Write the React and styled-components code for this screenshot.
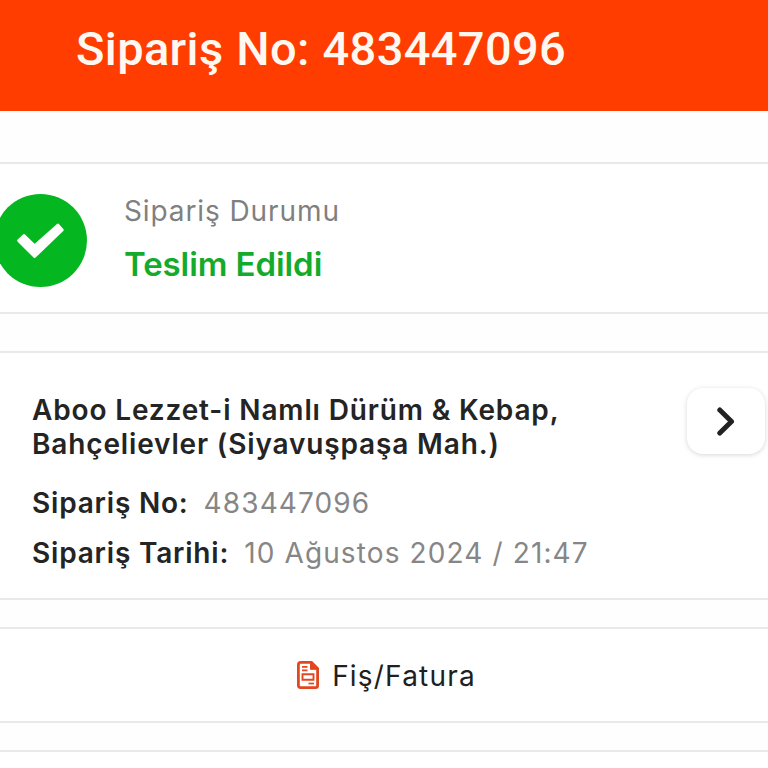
import React from "react";
import styled, { createGlobalStyle } from "styled-components";

const App = () => {
    return (
        <>
            <GlobalStyle />
            <Page>
                <Header>
                    <Title>Sipariş No: 483447096</Title>
                </Header>

                <StatusCard>
                    <StatusCircle>
                        <svg width="48" height="36" viewBox="0 0 48 36">
                            <path d="M2.7 17.6L8 12.6L18.6 22.8L42 2.2L46.2 7L18.6 33.5Z" fill="#fff" stroke="#fff" strokeWidth="3" strokeLinejoin="round" />
                        </svg>
                    </StatusCircle>
                    <StatusInfo>
                        <StatusLabel>Sipariş Durumu</StatusLabel>
                        <StatusValue>Teslim Edildi</StatusValue>
                    </StatusInfo>
                </StatusCard>

                <OrderCard>
                    <OrderInfo>
                        <Restaurant>
                            Aboo Lezzet-i Namlı Dürüm &amp; Kebap,<br />
                            Bahçelievler (Siyavuşpaşa Mah.)
                        </Restaurant>
                        <InfoRow>
                            <InfoLabel>Sipariş No:</InfoLabel>
                            <InfoValue>483447096</InfoValue>
                        </InfoRow>
                        <InfoRow>
                            <InfoLabel>Sipariş Tarihi:</InfoLabel>
                            <InfoValue>10 Ağustos 2024 / 21:47</InfoValue>
                        </InfoRow>
                    </OrderInfo>
                    <ArrowButton>
                        <svg width="20" height="30" viewBox="0 0 20 30" fill="none">
                            <path d="M3.8 4L15.5 15.5L3.8 27" stroke="#222" strokeWidth="5" strokeLinejoin="round" strokeLinecap="round" />
                        </svg>
                    </ArrowButton>
                </OrderCard>

                <InvoiceCard>
                    <svg width="22" height="28" viewBox="0 0 22 28" fill="none" stroke="#e2481f">
                        <path d="M3.5 1.4H14.5L20.6 7.5V24.5Q20.6 26.6 18.5 26.6H3.5Q1.4 26.6 1.4 24.5V3.5Q1.4 1.4 3.5 1.4Z" strokeWidth="2.8" />
                        <path d="M13.5 1.5V8.3H20.5Z" fill="#e2481f" strokeWidth="1" />
                        <path d="M5 5.8H10.5M5 9.4H10.5" strokeWidth="1.7" />
                        <path d="M5.5 13.3H16.5V18.7H5.5Z" strokeWidth="1.9" />
                        <path d="M11.5 22.5H17" strokeWidth="1.7" />
                    </svg>
                    <InvoiceText>Fiş/Fatura</InvoiceText>
                </InvoiceCard>

                <NextCard />
            </Page>
        </>
    );
};
export default App;


const GlobalStyle = createGlobalStyle`
    * {
        box-sizing: border-box;
    }

    body {
        margin: 0;
        background: #fefefe;
        overflow: hidden;
    }
`;

const Page = styled.div`
    width: 768px;
    height: 768px;
    display: flex;
    flex-direction: column;
    overflow: hidden;
    background: #fefefe;
    font-family: Inter, "Liberation Sans", sans-serif;
`;

const Header = styled.header`
    height: 111px;
    flex-shrink: 0;
    padding: 21px 0 0 76px;
    background: #ff3d00;
`;

const Title = styled.h1`
    margin: 0;
    font-family: Roboto, sans-serif;
    font-size: 47px;
    font-weight: 500;
    line-height: 56px;
    letter-spacing: 0.35px;
    word-spacing: 0.8px;
    color: #fff8f0;
    white-space: nowrap;
`;

const Card = styled.section`
    flex-shrink: 0;
    display: flex;
    background: #fff;
    border-top: 2px solid #e9e9e9;
    border-bottom: 2px solid #e9e9e9;
`;

const StatusCard = styled(Card)`
    height: 152px;
    margin-top: 51px;
    padding-top: 30px;
`;

const StatusCircle = styled.div`
    width: 93px;
    height: 93px;
    margin-left: -6.5px;
    flex-shrink: 0;
    display: flex;
    align-items: center;
    justify-content: center;
    border-radius: 50%;
    background: #04b61f;
`;

const StatusInfo = styled.div`
    margin-left: 37.5px;
    white-space: nowrap;
`;

const StatusLabel = styled.p`
    margin: 0;
    font-size: 28px;
    line-height: 34px;
    letter-spacing: 0.9px;
    color: #808080;
`;

const StatusValue = styled.p`
    margin: 16px 0 0;
    font-size: 33px;
    font-weight: 600;
    line-height: 40px;
    letter-spacing: -0.08px;
    color: #14ab2c;
`;

const OrderCard = styled(Card)`
    height: 249px;
    margin-top: 37px;
    padding: 40px 3px 0 32px;
    justify-content: space-between;
`;

const OrderInfo = styled.div`
    white-space: nowrap;
    color: #242424;
`;

const Restaurant = styled.h2`
    margin: 0 0 25px;
    font-size: 28px;
    font-weight: 600;
    line-height: 34px;
    letter-spacing: 0.85px;
`;

const InfoRow = styled.div`
    display: flex;
    gap: 15px;
    height: 50px;
    font-size: 28px;
    line-height: 34px;
`;

const InfoLabel = styled.span`
    font-weight: 600;
    letter-spacing: 0.8px;
`;

const InfoValue = styled.span`
    color: #868686;
    letter-spacing: 1.12px;
`;

const ArrowButton = styled.button`
    width: 78px;
    height: 66px;
    margin-top: -5px;
    padding: 0;
    display: flex;
    align-items: center;
    justify-content: center;
    border: none;
    border-radius: 16px;
    background: #fff;
    box-shadow: 0 1px 5px rgba(0, 0, 0, 0.16);
`;

const InvoiceCard = styled(Card)`
    height: 96px;
    margin-top: 27px;
    padding-left: 5px;
    align-items: center;
    justify-content: center;
    gap: 13px;
`;

const InvoiceText = styled.span`
    padding-top: 1px;
    font-size: 28px;
    line-height: 34px;
    letter-spacing: 1.2px;
    color: #202020;
`;

const NextCard = styled(Card)`
    height: 60px;
    margin-top: 27px;
`;
